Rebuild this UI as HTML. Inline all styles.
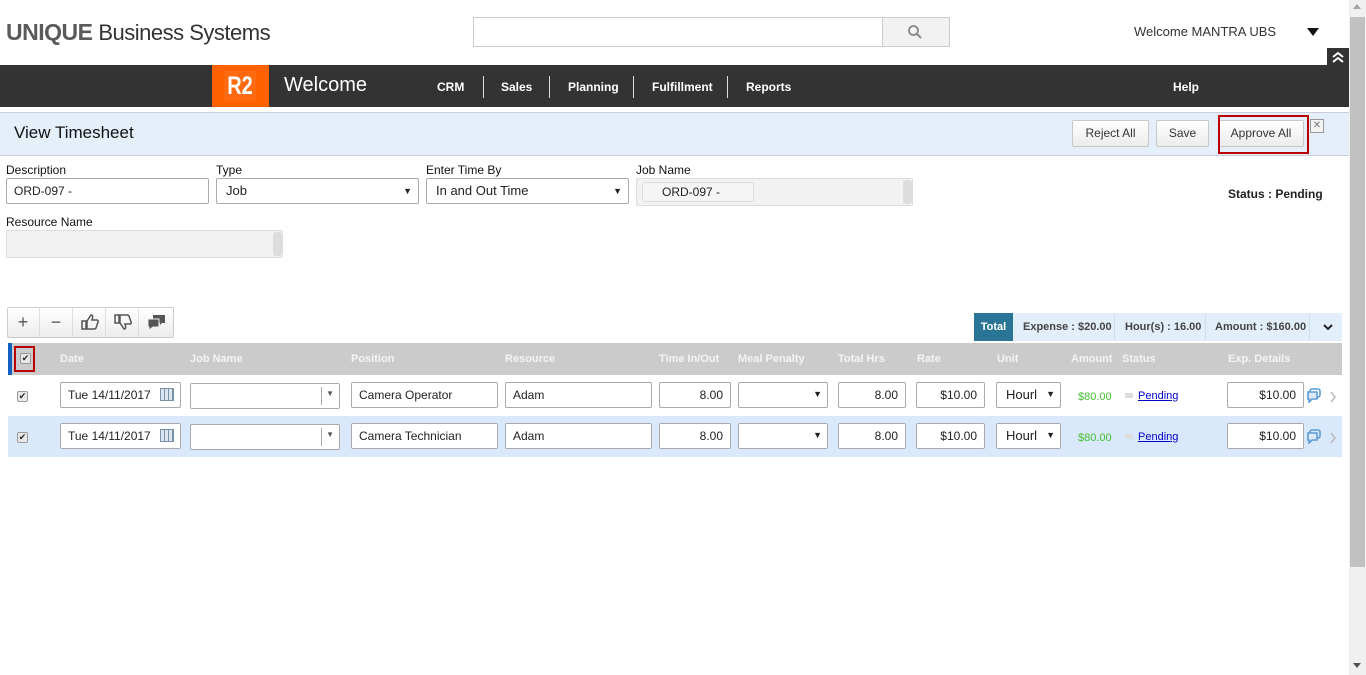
<!DOCTYPE html>
<html><head><meta charset="utf-8"><style>
*{box-sizing:border-box;margin:0;padding:0}
body{width:1366px;height:675px;overflow:hidden;background:#fff;font-family:"Liberation Sans",Arial,sans-serif;font-size:12px;color:#222;position:relative}
.a{position:absolute}
.inp{position:absolute;height:26px;border:1px solid #aaa;border-radius:2px;background:#fff;font-size:12px;padding:5px 7px;white-space:nowrap;overflow:hidden}
.r{text-align:right}
.lbl{position:absolute;font-size:12px;color:#111}
.th{position:absolute;top:353px;font-size:11px;font-weight:bold;color:#f4f4f4}
.cb{position:absolute;width:11px;height:11px;border:1px solid #999;background:#e8e8e8;border-radius:2px;font-size:9px;line-height:9px;text-align:center;color:#222}
.btn{position:absolute;top:120px;height:27px;border:1px solid #c8c8c8;border-radius:2px;background:linear-gradient(#fff,#ececec);font-size:12px;color:#333;text-align:center;line-height:25px}
.nav{position:absolute;top:80px;color:#fff;font-size:12px;font-weight:bold}
.sep{position:absolute;top:76px;width:1px;height:22px;background:#ddd}
.tb{position:absolute;top:307px;width:33px;height:30px;border-right:1px solid #ddd;text-align:center;line-height:30px;font-size:18px;color:#555}
.tb svg{position:absolute;left:8px;top:6px}
</style></head><body>
<div class="a" style="left:6px;top:19px;font-size:23px;color:#555;letter-spacing:-0.5px"><b style="font-weight:900;color:#5a5a5a">UNIQUE</b> <span style="color:#333;font-size:22px">Business Systems</span></div>
<div class="a" style="left:473px;top:17px;width:477px;height:30px;border:1px solid #ccc"></div>
<div class="a" style="left:882px;top:17px;width:68px;height:30px;border:1px solid #ccc;background:#f2f2f2"></div>
<svg class="a" style="left:907px;top:24px" width="16" height="16"><circle cx="6.5" cy="6.5" r="4.5" fill="none" stroke="#888" stroke-width="1.8"/><path d="M10 10l4 4" stroke="#888" stroke-width="2"/></svg>
<div class="a" style="left:1134px;top:24px;font-size:13px;color:#333">Welcome MANTRA UBS</div>
<div class="a" style="left:1307px;top:28px;border-left:6px solid transparent;border-right:6px solid transparent;border-top:8px solid #111"></div>
<div class="a" style="left:1327px;top:48px;width:22px;height:17px;background:#333"></div>
<svg class="a" style="left:1331px;top:50px" width="14" height="13"><path d="M2 7l5-4 5 4M2 12l5-4 5 4" fill="none" stroke="#fff" stroke-width="2"/></svg>
<div class="a" style="left:0;top:65px;width:1349px;height:42px;background:#333"></div>
<div class="a" style="left:212px;top:65px;width:57px;height:42px;background:#ff6000"></div>
<div class="a" style="left:220px;top:71px;width:40px;height:30px;background:#ff6a10;color:#fff;font-size:25px;font-weight:bold;text-align:center;line-height:30px;transform:scaleX(.8)">R2</div>
<div class="a" style="left:284px;top:74px;color:#fff;font-size:20px">Welcome</div>
<div class="nav" style="left:437px">CRM</div><div class="sep" style="left:483px"></div>
<div class="nav" style="left:501px">Sales</div><div class="sep" style="left:549px"></div>
<div class="nav" style="left:568px">Planning</div><div class="sep" style="left:633px"></div>
<div class="nav" style="left:652px">Fulfillment</div><div class="sep" style="left:727px"></div>
<div class="nav" style="left:746px">Reports</div>
<div class="nav" style="left:1173px">Help</div>
<div class="a" style="left:0;top:112px;width:1349px;height:44px;background:#e5effa;border-top:1px solid #ccd;border-bottom:1px solid #ccd"></div>
<div class="a" style="left:14px;top:123px;font-size:17px;color:#111">View Timesheet</div>
<div class="btn" style="left:1072px;width:77px">Reject All</div>
<div class="btn" style="left:1156px;width:53px">Save</div>
<div class="btn" style="left:1218px;width:86px">Approve All</div>
<div class="a" style="left:1218px;top:115px;width:91px;height:39px;border:2px solid #b00"></div>
<div class="a" style="left:1310px;top:119px;width:14px;height:14px;border:1px solid #999;color:#777;font-size:10px;text-align:center;line-height:12px;background:#f4f4f4">✕</div>
<div class="lbl" style="left:6px;top:163px">Description</div>
<div class="inp" style="left:6px;top:178px;width:203px">ORD-097 -</div>
<div class="lbl" style="left:216px;top:163px">Type</div>
<div class="inp" style="left:216px;top:178px;width:203px;font-size:13px;padding:4px 9px">Job<span style="position:absolute;right:6px;font-size:9px;top:7px">▼</span></div>
<div class="lbl" style="left:426px;top:163px">Enter Time By</div>
<div class="inp" style="left:426px;top:178px;width:203px;font-size:13px;padding:4px 9px">In and Out Time<span style="position:absolute;right:6px;font-size:9px;top:7px">▼</span></div>
<div class="lbl" style="left:636px;top:163px">Job Name</div>
<div class="a" style="left:636px;top:178px;width:277px;height:28px;background:#f2f2f2;border:1px solid #ddd;border-radius:2px"></div>
<div class="a" style="left:642px;top:182px;width:112px;height:20px;border:1px solid #ddd;border-radius:3px;background:#f5f5f5;font-size:12px;padding:2px 0 0 19px">ORD-097 -</div>
<div class="a" style="left:903px;top:180px;width:9px;height:24px;background:#ddd;border-radius:3px"></div>
<div class="a" style="left:1228px;top:187px;font-weight:bold;font-size:12px">Status : Pending</div>
<div class="lbl" style="left:6px;top:215px">Resource Name</div>
<div class="a" style="left:6px;top:230px;width:277px;height:28px;background:#f2f2f2;border:1px solid #ddd;border-radius:2px"></div>
<div class="a" style="left:273px;top:232px;width:9px;height:24px;background:#ddd;border-radius:3px"></div>
<div class="a" style="left:7px;top:307px;width:167px;height:31px;border:1px solid #ccc;border-radius:2px;background:linear-gradient(#fff,#ececec)"></div>
<div class="tb" style="left:7px">+</div><div class="tb" style="left:40px">−</div>
<div class="tb" style="left:73px"><svg width="18" height="18"><path d="M1 8h4v8H1zM6 8l4-6c2 0 2 2 1 5h5c1 0 1.5 1 1 2l-2 6c-.3.7-1 1-2 1H6z" fill="none" stroke="#555" stroke-width="1.5"/></svg></div>
<div class="tb" style="left:106px"><svg width="18" height="18"><path d="M1 2h4v8H1zM6 10l4 6c2 0 2-2 1-5h5c1 0 1.5-1 1-2l-2-6c-.3-.7-1-1-2-1H6z" fill="none" stroke="#555" stroke-width="1.5"/></svg></div>
<div class="tb" style="left:139px;border:0"><svg width="20" height="18"><path d="M6 2h12v8h-3l-2 2V10H6z" fill="#555"/><path d="M1 6h11v8H6l-4 3v-3H1z" fill="#555" stroke="#eee" stroke-width="1"/></svg></div>
<div class="a" style="left:974px;top:313px;width:368px;height:28px;background:#e3eefb"></div>
<div class="a" style="left:974px;top:313px;width:39px;height:28px;background:#2a7596;color:#fff;font-weight:bold;font-size:11px;text-align:center;line-height:28px">Total</div>
<div class="a" style="left:1023px;top:321px;font-size:11px;font-weight:bold;color:#444">Expense : $20.00</div>
<div class="a" style="left:1114px;top:314px;width:1px;height:26px;background:#cde"></div>
<div class="a" style="left:1125px;top:321px;font-size:11px;font-weight:bold;color:#444">Hour(s) : 16.00</div>
<div class="a" style="left:1205px;top:314px;width:1px;height:26px;background:#cde"></div>
<div class="a" style="left:1215px;top:321px;font-size:11px;font-weight:bold;color:#444">Amount : $160.00</div>
<div class="a" style="left:1309px;top:314px;width:1px;height:26px;background:#cde"></div>
<svg class="a" style="left:1322px;top:323px" width="12" height="10"><path d="M2 2l4 4 4-4" fill="none" stroke="#222" stroke-width="2"/></svg>
<div class="a" style="left:8px;top:343px;width:1334px;height:32px;background:#cbcbcb"></div>
<div class="a" style="left:8px;top:343px;width:4px;height:32px;background:#1060c0"></div>
<div class="a" style="left:14px;top:346px;width:21px;height:26px;border:2px solid #b00"></div>
<div class="cb" style="left:20px;top:353px">✔</div>
<div class="th" style="left:60px">Date</div><div class="th" style="left:190px">Job Name</div><div class="th" style="left:351px">Position</div><div class="th" style="left:505px">Resource</div><div class="th" style="left:659px">Time In/Out</div><div class="th" style="left:738px">Meal Penalty</div><div class="th" style="left:838px">Total Hrs</div><div class="th" style="left:917px">Rate</div><div class="th" style="left:997px">Unit</div><div class="th" style="left:1071px">Amount</div><div class="th" style="left:1122px">Status</div><div class="th" style="left:1228px">Exp. Details</div>
<div class="a" style="left:8px;top:416px;width:1334px;height:41px;background:#d9e8fa"></div>

<div class="cb" style="left:17px;top:391px">✔</div>
<div class="cb" style="left:17px;top:432px">✔</div>
<div class="inp" style="left:60px;top:382px;width:121px">Tue 14/11/2017</div>
<div class="inp" style="left:60px;top:423px;width:121px">Tue 14/11/2017</div>
<div class="a" style="left:160px;top:388px;width:14px;height:13px;border:1px solid #7890a8;background:repeating-linear-gradient(90deg,#dde5ee 0 3px,#7890a8 3px 4px)"></div>
<div class="a" style="left:160px;top:429px;width:14px;height:13px;border:1px solid #7890a8;background:repeating-linear-gradient(90deg,#dde5ee 0 3px,#7890a8 3px 4px)"></div>
<div class="inp" style="left:190px;top:383px;width:150px"><span style="position:absolute;left:130px;top:3px;height:18px;border-left:1px solid #aaa"></span><span style="position:absolute;right:5px;top:5px;font-size:8px;color:#555">▼</span></div>
<div class="inp" style="left:190px;top:424px;width:150px"><span style="position:absolute;left:130px;top:3px;height:18px;border-left:1px solid #aaa"></span><span style="position:absolute;right:5px;top:5px;font-size:8px;color:#555">▼</span></div>
<div class="inp" style="left:351px;top:382px;width:147px">Camera Operator</div>
<div class="inp" style="left:351px;top:423px;width:147px">Camera Technician</div>
<div class="inp" style="left:505px;top:382px;width:147px">Adam</div>
<div class="inp" style="left:505px;top:423px;width:147px">Adam</div>
<div class="inp r" style="left:659px;top:382px;width:72px">8.00</div>
<div class="inp r" style="left:659px;top:423px;width:72px">8.00</div>
<div class="inp" style="left:738px;top:382px;width:90px"><span style="position:absolute;right:5px;top:6px;font-size:9px">▼</span></div>
<div class="inp" style="left:738px;top:423px;width:90px"><span style="position:absolute;right:5px;top:6px;font-size:9px">▼</span></div>
<div class="inp r" style="left:838px;top:382px;width:68px">8.00</div>
<div class="inp r" style="left:838px;top:423px;width:68px">8.00</div>
<div class="inp r" style="left:916px;top:382px;width:69px">$10.00</div>
<div class="inp r" style="left:916px;top:423px;width:69px">$10.00</div>
<div class="inp" style="left:996px;top:382px;width:65px;font-size:13px;padding:4px 9px">Hourl<span style="position:absolute;right:5px;top:6px;font-size:9px;background:#fff">▼</span></div>
<div class="inp" style="left:996px;top:423px;width:65px;font-size:13px;padding:4px 9px">Hourl<span style="position:absolute;right:5px;top:6px;font-size:9px;background:#fff">▼</span></div>
<div class="a" style="left:1078px;top:391px;font-size:11px;color:#44c030">$80.00</div>
<div class="a" style="left:1078px;top:432px;font-size:11px;color:#44c030">$80.00</div>
<div class="a" style="left:1125px;top:393px;width:8px;height:5px;background:#ddd"></div>
<div class="a" style="left:1125px;top:434px;width:8px;height:5px;background:#ddd"></div>
<div class="a" style="left:1138px;top:390px;font-size:11px;color:#00c;text-decoration:underline">Pending</div>
<div class="a" style="left:1138px;top:431px;font-size:11px;color:#00c;text-decoration:underline">Pending</div>
<div class="inp r" style="left:1227px;top:382px;width:77px">$10.00</div>
<div class="inp r" style="left:1227px;top:423px;width:77px">$10.00</div>
<svg class="a" style="left:1306px;top:388px" width="16" height="15"><rect x="4" y="1" width="10" height="8" rx="2" fill="none" stroke="#5b9bd5" stroke-width="1.6"/><path d="M2 4h9v7H6l-3 3v-3H2z" fill="#dbe9f8" stroke="#5b9bd5" stroke-width="1.6"/></svg>
<svg class="a" style="left:1306px;top:429px" width="16" height="15"><rect x="4" y="1" width="10" height="8" rx="2" fill="none" stroke="#5b9bd5" stroke-width="1.6"/><path d="M2 4h9v7H6l-3 3v-3H2z" fill="#dbe9f8" stroke="#5b9bd5" stroke-width="1.6"/></svg>
<svg class="a" style="left:1329px;top:391px" width="8" height="12"><path d="M2 1l4 5-4 5" fill="none" stroke="#bbb" stroke-width="1.6"/></svg>
<svg class="a" style="left:1329px;top:432px" width="8" height="12"><path d="M2 1l4 5-4 5" fill="none" stroke="#bbb" stroke-width="1.6"/></svg>
<div class="a" style="left:1349px;top:0;width:17px;height:675px;background:#f0f0f0"></div>
<div class="a" style="left:1350px;top:17px;width:15px;height:550px;background:#c1c1c1"></div>
<div class="a" style="left:1353px;top:4px;border-left:4px solid transparent;border-right:4px solid transparent;border-bottom:5px solid #a3a3a3"></div>
<div class="a" style="left:1353px;top:663px;border-left:4px solid transparent;border-right:4px solid transparent;border-top:5px solid #505050"></div>
</body></html>
